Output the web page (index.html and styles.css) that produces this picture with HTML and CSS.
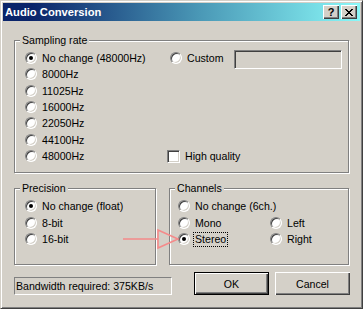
FILE: index.html
```html
<!DOCTYPE html>
<html lang="en">
<head>
    <meta charset="UTF-8">
    <title>Audio Conversion</title>
    <link rel="stylesheet" href="styles.css">
</head>
<body>
    <div class="window">
        <div class="titlebar">
            <span class="title">Audio Conversion</span>
            <div class="title-btns">
                <span class="tbtn help">?</span>
                <span class="tbtn close">
                    <svg width="8" height="7" viewBox="0 0 8 7"><path d="M0 0L7 7M1 0L8 7M7 0L0 7M8 0L1 7" stroke="#000" stroke-width="1" shape-rendering="crispEdges"/></svg>
                </span>
            </div>
        </div>

        <div class="dialog-body">
            <div class="group sampling">
                <div class="group-label">Sampling rate</div>
                <div class="cols">
                    <div class="col-rates">
                        <div class="opt"><span class="radio checked"></span>No change (48000Hz)</div>
                        <div class="opt"><span class="radio"></span>8000Hz</div>
                        <div class="opt"><span class="radio"></span>11025Hz</div>
                        <div class="opt"><span class="radio"></span>16000Hz</div>
                        <div class="opt"><span class="radio"></span>22050Hz</div>
                        <div class="opt"><span class="radio"></span>44100Hz</div>
                        <div class="opt"><span class="radio"></span>48000Hz</div>
                    </div>
                    <div class="col-extra">
                        <div class="opt"><span class="radio"></span>Custom<span class="textbox"></span></div>
                        <div class="opt"><span class="checkbox"></span>High quality</div>
                    </div>
                </div>
            </div>

            <div class="lower">
                <div class="group precision">
                    <div class="group-label">Precision</div>
                    <div class="opts">
                        <div class="opt"><span class="radio checked"></span>No change (float)</div>
                        <div class="opt"><span class="radio"></span>8-bit</div>
                        <div class="opt"><span class="radio"></span>16-bit</div>
                    </div>
                </div>
                <div class="group channels">
                    <div class="group-label">Channels</div>
                    <div class="opts">
                        <div class="opt wide"><span class="radio"></span>No change (6ch.)</div>
                        <div class="opt"><span class="radio"></span>Mono</div>
                        <div class="opt"><span class="radio"></span>Left</div>
                        <div class="opt"><span class="radio checked"></span><span class="focus">Stereo</span></div>
                        <div class="opt"><span class="radio"></span>Right</div>
                    </div>
                </div>
            </div>

            <div class="footer">
                <div class="status">Bandwidth required: 375KB/s</div>
                <button class="btn default">OK</button>
                <button class="btn">Cancel</button>
            </div>
        </div>

        <!-- annotation arrow drawn over the dialog -->
        <svg class="arrow" width="62" height="25" viewBox="0 0 62 25">
            <path d="M3 12H38" stroke="#f58a8a" stroke-width="1.6" fill="none"/>
            <path d="M38 3L58 12L38 21Z" stroke="#f58a8a" stroke-width="1.6" fill="none" stroke-linejoin="miter"/>
        </svg>
    </div>
</body>
</html>
```

FILE: styles.css
```css
* {
    margin: 0;
    padding: 0;
    box-sizing: border-box;
}

body {
    font-family: "Liberation Sans", Arial, sans-serif;
    font-size: 10.6px;
    color: #000;
    background: #d4d0c8;
}

.window {
    position: relative;
    width: 363px;
    height: 309px;
    background: #d4d0c8;
    border: 1px solid;
    border-color: #d4d0c8 #404040 #404040 #d4d0c8;
    box-shadow: inset 1px 1px 0 #fff, inset -1px -1px 0 #808080;
    padding: 2px;
}

/* title bar */
.titlebar {
    height: 18px;
    display: flex;
    align-items: center;
    padding: 0 3px 0 2px;
    background: linear-gradient(to right, #0a246a 8%, #4a98b6 55%, #8af8f8 100%);
}

.title {
    color: #fff;
    font-weight: bold;
    font-size: 11.2px;
}

.title-btns {
    margin-left: auto;
    display: flex;
    gap: 2px;
}

.tbtn {
    width: 16px;
    height: 14px;
    display: flex;
    align-items: center;
    justify-content: center;
    background: #d4d0c8;
    box-shadow: inset 1px 1px 0 #fff, inset -1px -1px 0 #404040, inset -2px -2px 0 #808080;
    font-weight: bold;
    font-size: 11px;
    line-height: 12px;
}

/* dialog content */
.dialog-body {
    padding: 19px 11px 0 11px;
}

.group {
    border: 1px solid #808080;
    box-shadow: inset 1px 1px 0 #fff, 1px 1px 0 #fff;
}

.group-label {
    width: fit-content;
    margin: -7px 0 0 5px;
    padding: 0 2px;
    line-height: 13px;
    background: #d4d0c8;
}

.opt {
    display: flex;
    align-items: center;
    height: 16.33px;
    white-space: nowrap;
}

.radio {
    position: relative;
    width: 12px;
    height: 12px;
    margin-right: 5px;
    flex: none;
    border-radius: 50%;
    background: #fff;
    border: 1px solid;
    border-color: #808080 #fff #fff #808080;
    box-shadow: inset 1px 1px 0 #404040, inset -1px -1px 0 #d4d0c8;
}

.radio.checked::after {
    content: "";
    position: absolute;
    left: 3px;
    top: 3px;
    width: 4px;
    height: 4px;
    border-radius: 50%;
    background: #000;
}

.checkbox {
    width: 13px;
    height: 13px;
    margin: 0 5px 0 -3px;
    flex: none;
    background: #fff;
    border: 1px solid;
    border-color: #808080 #fff #fff #808080;
    box-shadow: inset 1px 1px 0 #404040, inset -1px -1px 0 #d4d0c8;
}

.textbox {
    align-self: flex-start;
    width: 108px;
    height: 19px;
    margin-left: auto;
    flex: none;
    background: #d4d0c8;
    border: 1px solid;
    border-color: #808080 #fff #fff #808080;
    box-shadow: inset 1px 1px 0 #404040, inset -1px -1px 0 #d4d0c8;
}

/* sampling rate */
.sampling .cols {
    display: flex;
    margin: 3px 0 0 10px;
    padding: 0 6px 8px 0;
}

.col-rates {
    width: 145px;
}

.col-extra {
    flex: 1;
    display: flex;
    flex-direction: column;
    justify-content: space-between;
}

/* precision + channels */
.lower {
    display: flex;
    gap: 13px;
    margin-top: 15px;
}

.precision {
    width: 142px;
    height: 77px;
}

.channels {
    width: 180px;
    height: 77px;
}

.precision .opts {
    margin: 3px 0 0 10px;
}

.channels .opts {
    display: grid;
    grid-template-columns: 92px auto;
    margin: 3px 0 0 8px;
}

.channels .wide {
    grid-column: span 2;
}

.focus {
    margin-left: -2px;
    padding: 0 1px;
    border: 1px dotted #000;
    line-height: 13px;
}

/* footer */
.footer {
    display: flex;
    align-items: flex-end;
    margin: 7px -1px 0 0;
}

.status {
    width: 158px;
    height: 18px;
    padding-left: 1px;
    line-height: 16px;
    border: 1px solid;
    border-color: #808080 #fff #fff #808080;
}

.btn {
    width: 75px;
    height: 23px;
    font-family: inherit;
    font-size: 10.6px;
    color: #000;
    background: #d4d0c8;
    border: none;
    box-shadow: inset 1px 1px 0 #fff, inset -1px -1px 0 #404040, inset -2px -2px 0 #808080;
}

.btn.default {
    margin-left: auto;
    margin-right: 6px;
    border: 1px solid #000;
}

.arrow {
    position: absolute;
    left: 119px;
    top: 226px;
}
```
